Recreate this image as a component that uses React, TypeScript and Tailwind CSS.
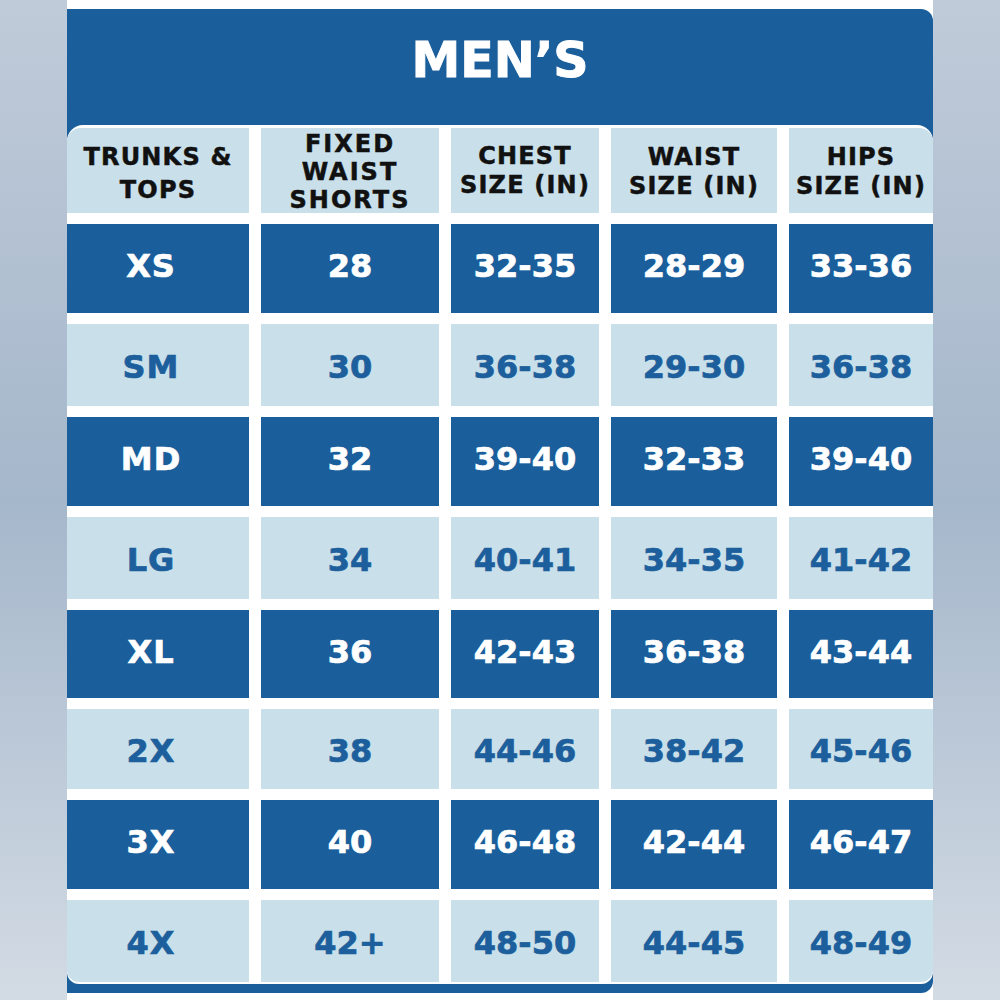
const rows = [
  ["XS", "28", "32-35", "28-29", "33-36"],
  ["SM", "30", "36-38", "29-30", "36-38"],
  ["MD", "32", "39-40", "32-33", "39-40"],
  ["LG", "34", "40-41", "34-35", "41-42"],
  ["XL", "36", "42-43", "36-38", "43-44"],
  ["2X", "38", "44-46", "38-42", "45-46"],
  ["3X", "40", "46-48", "42-44", "46-47"],
  ["4X", "42+", "48-50", "44-45", "48-49"],
];

// row heights, top to bottom (dark rows are a little taller)
const rowH = ["h-[89px]", "h-[82px]", "h-[89px]", "h-[82px]", "h-[88px]", "h-[80px]", "h-[89px]", "h-[82px]"];

const head = "flex h-[85px] flex-col items-center justify-center bg-[#c9dfe9] text-[24px] tracking-[1.2px] text-[#111] [-webkit-text-stroke:0.5px_#111]";

export default function App() {
  return (
    <div className="flex min-h-screen w-full justify-center bg-linear-to-b from-[#c0cbd9] via-[#a5b7cb] to-[#d3dbe4] font-['DejaVu_Sans',sans-serif] font-bold">
      <div className="h-[1000px] w-[866px] bg-white pt-[9px] pb-[7px]">
        <div className="flex h-full flex-col rounded-tr-[12px] rounded-br-[12px] bg-[#1a5f9c]">
          <div className="h-[116px] pt-[27px] text-center text-[49px] leading-none text-white [-webkit-text-stroke:1px_#fff]">
            MEN’S
          </div>

          <div className="rounded-t-[16px] rounded-b-[12px] bg-white pt-[3px] pb-[2px]">
            <div className="grid grid-cols-[182px_178px_148px_166px_144px] gap-x-[12px] gap-y-[11px]">
              <div className={`${head} rounded-tl-[14px] pt-[6px] leading-[33px]`}>
                <span>TRUNKS &amp;</span>
                <span>TOPS</span>
              </div>
              <div className={`${head} pt-[2px] text-[23px] leading-[28px] tracking-[2px]`}>
                <span>FIXED</span>
                <span>WAIST</span>
                <span>SHORTS</span>
              </div>
              <div className={`${head} leading-[29px]`}>
                <span>CHEST</span>
                <span>SIZE (IN)</span>
              </div>
              <div className={`${head} pt-[2px] leading-[29px]`}>
                <span>WAIST</span>
                <span>SIZE (IN)</span>
              </div>
              <div className={`${head} rounded-tr-[14px] pt-[2px] leading-[29px]`}>
                <span>HIPS</span>
                <span>SIZE (IN)</span>
              </div>

              {rows.map((row, i) => {
                const dark = i % 2 === 0;
                const last = i === rows.length - 1;
                return row.map((value, j) => (
                  <div
                    key={`${i}-${j}`}
                    className={[
                      "flex items-center justify-center text-[32px] leading-none",
                      rowH[i],
                      dark
                        ? "pb-[5px] bg-[#1a5f9c] text-white [-webkit-text-stroke:0.7px_#fff]"
                        : "pt-[3px] bg-[#c9dfe9] text-[#1c5f9c] [-webkit-text-stroke:0.7px_#1c5f9c]",
                      j === 0 ? "pr-[14px] tracking-[1px]" : "",
                      last && j === 0 ? "rounded-bl-[12px]" : "",
                      last && j === 4 ? "rounded-br-[12px]" : "",
                    ].join(" ")}
                  >
                    {value}
                  </div>
                ));
              })}
            </div>
          </div>

          {/* blue strip under the table */}
          <div className="flex-1" />
        </div>
      </div>
    </div>
  );
}
